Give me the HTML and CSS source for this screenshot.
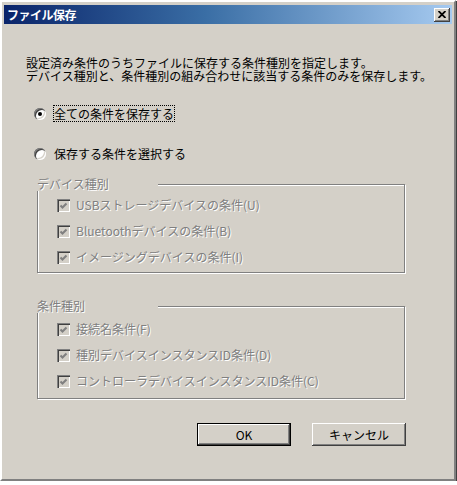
FILE: index.html
```html
<!DOCTYPE html>
<html lang="ja">
<head>
<meta charset="utf-8">
<title>ファイル保存</title>
<link rel="stylesheet" href="styles.css">
</head>
<body>
<div class="window">
  <div class="titlebar">
    <span class="title">ファイル保存</span>
    <span class="close"><svg width="8" height="7" viewBox="0 0 8 7"><path d="M0.5 0 L7.5 7 M7.5 0 L0.5 7" stroke="#000" stroke-width="1.8" fill="none"/></svg></span>
  </div>
  <div class="client">
    <p class="desc">設定済み条件のうちファイルに保存する条件種別を指定します。<br>デバイス種別と、条件種別の組み合わせに該当する条件のみを保存します。</p>
    <div class="radio-row first">
      <span class="radio checked"></span>
      <span class="radio-label focus">全ての条件を保存する</span>
    </div>
    <div class="radio-row second">
      <span class="radio"></span>
      <span class="radio-label">保存する条件を選択する</span>
    </div>
    <div class="group g1">
      <span class="group-label">デバイス種別</span>
      <div class="check-row"><span class="check"><svg width="13" height="13" viewBox="0 0 13 13"><polyline points="3.5,6.5 5.5,8.5 9.5,4.5" fill="none" stroke="#808080" stroke-width="2.12"/></svg></span><span class="check-label">USBストレージデバイスの条件(U)</span></div>
      <div class="check-row"><span class="check"><svg width="13" height="13" viewBox="0 0 13 13"><polyline points="3.5,6.5 5.5,8.5 9.5,4.5" fill="none" stroke="#808080" stroke-width="2.12"/></svg></span><span class="check-label">Bluetoothデバイスの条件(B)</span></div>
      <div class="check-row"><span class="check"><svg width="13" height="13" viewBox="0 0 13 13"><polyline points="3.5,6.5 5.5,8.5 9.5,4.5" fill="none" stroke="#808080" stroke-width="2.12"/></svg></span><span class="check-label">イメージングデバイスの条件(I)</span></div>
    </div>
    <div class="group g2">
      <span class="group-label">条件種別</span>
      <div class="check-row"><span class="check"><svg width="13" height="13" viewBox="0 0 13 13"><polyline points="3.5,6.5 5.5,8.5 9.5,4.5" fill="none" stroke="#808080" stroke-width="2.12"/></svg></span><span class="check-label">接続名条件(F)</span></div>
      <div class="check-row"><span class="check"><svg width="13" height="13" viewBox="0 0 13 13"><polyline points="3.5,6.5 5.5,8.5 9.5,4.5" fill="none" stroke="#808080" stroke-width="2.12"/></svg></span><span class="check-label">種別デバイスインスタンスID条件(D)</span></div>
      <div class="check-row"><span class="check"><svg width="13" height="13" viewBox="0 0 13 13"><polyline points="3.5,6.5 5.5,8.5 9.5,4.5" fill="none" stroke="#808080" stroke-width="2.12"/></svg></span><span class="check-label">コントローラデバイスインスタンスID条件(C)</span></div>
    </div>
    <div class="buttons">
      <button class="btn default">OK</button>
      <button class="btn">キャンセル</button>
    </div>
  </div>
</div>
</body>
</html>
```

FILE: styles.css
```css
html, body {
  margin: 0;
  padding: 0;
  background: #ffffff;
}

body {
  font-family: "Noto Sans CJK JP", "DejaVu Sans", sans-serif;
  font-size: 12px;
  color: #000;
}

.window {
  box-sizing: border-box;
  width: 456px;
  height: 481px;
  background: #d4d0c8;
  padding: 3px 2px 2px 2px;
  border: 2px solid;
  border-color: #ffffff #808080 #808080 #ffffff;
  box-shadow: 1px 1px 0 #404040;
  display: flex;
  flex-direction: column;
}

.titlebar {
  height: 19px;
  flex: none;
  background: linear-gradient(to right, #0a246a 0%, #3a6ea5 45%, #a6caf0 100%);
  display: flex;
  align-items: center;
  justify-content: space-between;
  padding: 0 2px 0 3px;
}

.title {
  color: #fff;
  font-weight: bold;
  font-size: 12px;
  line-height: 14px;
  letter-spacing: -0.5px;
}

.close {
  box-sizing: border-box;
  width: 16px;
  height: 14px;
  background: #d4d0c8;
  box-shadow: inset -1px -1px 0 #404040, inset 1px 1px 0 #ffffff, inset -2px -2px 0 #808080;
  display: flex;
  align-items: center;
  justify-content: center;
  padding: 0 1px 1px 0;
}

.close svg {
  display: block;
}

.client {
  flex: 1;
  display: flex;
  flex-direction: column;
}

.desc {
  margin: 32px 0 0 22px;
  line-height: 13px;
  white-space: nowrap;
}

.radio-row {
  display: flex;
  align-items: center;
  height: 17px;
  margin-left: 30px;
}

.radio-row.first {
  margin-top: 23px;
}

.radio-row.second {
  margin-top: 23px;
}

.radio {
  position: relative;
  width: 12px;
  height: 12px;
  border-radius: 50%;
  background: #fff;
  box-shadow: inset 1px 1px 0 #808080, inset 2px 2px 0 #404040, inset -1px -1px 0 #ffffff, inset -2px -2px 0 #d4d0c8;
  flex: none;
}

.radio.checked::after {
  content: "";
  position: absolute;
  left: 4px;
  top: 4px;
  width: 4px;
  height: 4px;
  border-radius: 50%;
  background: #000;
}

.radio-label {
  margin-left: 7px;
  line-height: 15px;
  border: 1px dotted transparent;
  white-space: nowrap;
}

.radio-label.focus {
  border-color: #000;
}

.group {
  position: relative;
  box-sizing: border-box;
  margin-left: 33px;
  width: 368px;
  border: 1px solid #808080;
  box-shadow: inset 1px 1px 0 #ffffff, 1px 1px 0 #ffffff;
  display: flex;
  flex-direction: column;
  gap: 10px;
  padding: 12px 0 0 19px;
}

.group.g1 {
  margin-top: 22px;
  height: 89px;
}

.group.g2 {
  margin-top: 33px;
  height: 93px;
  padding-top: 14px;
}

.group-label {
  position: absolute;
  left: -1px;
  top: -8px;
  width: 121px;
  background: #d4d0c8;
  line-height: 14px;
  color: #808080;
  text-shadow: 1px 1px 0 #ffffff;
}

.check-row {
  display: flex;
  align-items: center;
  height: 16px;
}

.check {
  width: 13px;
  height: 13px;
  flex: none;
  background: #d4d0c8;
  box-shadow: inset 1px 1px 0 #808080, inset 2px 2px 0 #404040, inset -1px -1px 0 #ffffff, inset -2px -2px 0 #d4d0c8;
}

.check svg {
  display: block;
}

.check-label {
  margin-left: 6px;
  line-height: 14px;
  color: #808080;
  text-shadow: 1px 1px 0 #ffffff;
  white-space: nowrap;
}

.buttons {
  display: flex;
  gap: 21px;
  margin: 24px 0 0 193px;
}

.btn {
  box-sizing: border-box;
  width: 94px;
  height: 23px;
  padding: 0;
  border: none;
  background: #d4d0c8;
  font-family: "Noto Sans CJK JP", "DejaVu Sans", sans-serif;
  font-size: 12px;
  color: #000;
  box-shadow: inset -1px -1px 0 #404040, inset 1px 1px 0 #ffffff, inset -2px -2px 0 #808080;
}

.btn.default {
  box-shadow: inset 0 0 0 1px #000000, inset -2px -2px 0 #404040, inset 2px 2px 0 #ffffff, inset -3px -3px 0 #808080;
}
```
